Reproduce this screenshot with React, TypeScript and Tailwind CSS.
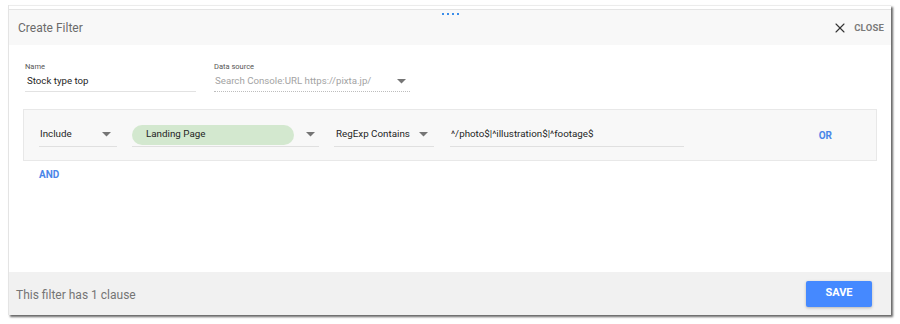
import { X } from 'lucide-react';

function Caret() {
  return (
    <svg width="9" height="5" viewBox="0 0 9 5" className="shrink-0">
      <path d="M0 0h9L4.5 4.5z" fill="#757575" />
    </svg>
  );
}

export default function App() {
  return (
    <div className="w-[900px] h-[324px] bg-white pt-[5px] pl-[8px] font-['Roboto',sans-serif] whitespace-nowrap">
      <div className="w-[883px] flex flex-col border-l border-[#e4e4e4] shadow-[2px_2px_2px_rgba(0,0,0,0.6)]">
        <div className="h-px bg-[#ececec]" />
        <div className="h-[3px] bg-white" />
        {/* Header */}
        <div className="relative h-[36px] bg-[#f8f8f8] border-t border-[#e4e4e4] flex items-center pl-[9px] pr-[7px]">
          <div className="absolute left-[433px] top-[3px] flex gap-[3px]">
            <span className="w-[2px] h-[2px] bg-[#3b8eea]" />
            <span className="w-[2px] h-[2px] bg-[#3b8eea]" />
            <span className="w-[2px] h-[2px] bg-[#3b8eea]" />
            <span className="w-[2px] h-[2px] bg-[#3b8eea]" />
          </div>
          <span className="text-[12px] text-[#6b6b6b] mt-[1px]">Create Filter</span>
          <div className="ml-auto flex items-center gap-[6px] mt-[1px]">
            <X size={16} strokeWidth={1.6} color="#333" />
            <span className="text-[9.5px] font-bold text-[#7a7a7a] tracking-[0.2px]">CLOSE</span>
          </div>
        </div>

        {/* Body */}
        <div className="h-[227px] bg-white px-[14px] pt-[17px]">
          <div className="flex">
            <div className="w-[171px] ml-[2px] flex flex-col">
              <span className="text-[7.5px] text-[#555] leading-[9px]">Name</span>
              <span className="text-[9.7px] text-[#1f1f1f] mt-[4px] leading-[12px] pl-[2px]">Stock type top</span>
              <div className="h-px bg-[#e2e2e2] mt-[4px]" />
            </div>
            <div className="w-[196px] ml-[18px] flex flex-col">
              <span className="text-[7.5px] text-[#555] leading-[9px]">Data source</span>
              <div className="flex items-center mt-[4px] h-[12px] pl-[1px] pr-[4px]">
                <span className="text-[9.7px] text-[#a3a3a3] leading-[12px]">Search Console:URL https://pixta.jp/</span>
                <span className="ml-auto"><Caret /></span>
              </div>
              <div className="mt-[4px] border-t border-dotted border-[#bdbdbd]" />
            </div>
          </div>

          <div className="mt-[17px] h-[52px] bg-[#f8f8f8] border border-[#e8e8e8] flex items-center pl-[15px] pr-[44px]">
            <div className="w-[78px] flex flex-col mt-[1px]">
              <div className="flex items-center h-[20px] pl-[1px] pr-[6px]">
                <span className="text-[9.8px] text-[#1f1f1f]">Include</span>
                <span className="ml-auto"><Caret /></span>
              </div>
              <div className="h-px bg-[#e0e0e0] mt-[1px]" />
            </div>
            <div className="w-[187px] ml-[15px] flex flex-col mt-[1px]">
              <div className="flex items-center h-[20px] pr-[4px]">
                <span className="w-[162px] h-[20px] rounded-full bg-[#d3e8cf] flex items-center pl-[14px] text-[9.8px] text-[#1f1f1f]">Landing Page</span>
                <span className="ml-auto"><Caret /></span>
              </div>
              <div className="h-px bg-[#e0e0e0] mt-[1px]" />
            </div>
            <div className="w-[100px] ml-[15px] flex flex-col mt-[1px]">
              <div className="flex items-center h-[20px] pl-[2px] pr-[6px]">
                <span className="text-[9.8px] text-[#1f1f1f]">RegExp Contains</span>
                <span className="ml-auto"><Caret /></span>
              </div>
              <div className="h-px bg-[#e0e0e0] mt-[1px]" />
            </div>
            <div className="w-[234px] ml-[16px] flex flex-col mt-[1px]">
              <div className="flex items-center h-[20px] pl-[1px]">
                <span className="text-[9.8px] text-[#1f1f1f]">^/photo$|^illustration$|^footage$</span>
              </div>
              <div className="h-px bg-[#e0e0e0] mt-[1px]" />
            </div>
            <span className="ml-auto text-[10px] font-bold text-[#4a86e8]">OR</span>
          </div>

          <div className="mt-[6px] pl-[16px] text-[10px] font-bold text-[#4a86e8]">AND</div>
        </div>

        {/* Footer */}
        <div className="h-[43px] bg-[#f1f1f1] flex items-center pl-[7px] pr-[19px]">
          <span className="text-[12px] text-[#757575] mt-[3px]">This filter has 1 clause</span>
          <button className="ml-auto w-[66px] h-[26px] rounded-[2px] bg-[#4589ff] text-white text-[11px] font-bold shadow-[0_1px_3px_rgba(0,0,0,0.25)]">
            SAVE
          </button>
        </div>
      </div>
    </div>
  );
}
